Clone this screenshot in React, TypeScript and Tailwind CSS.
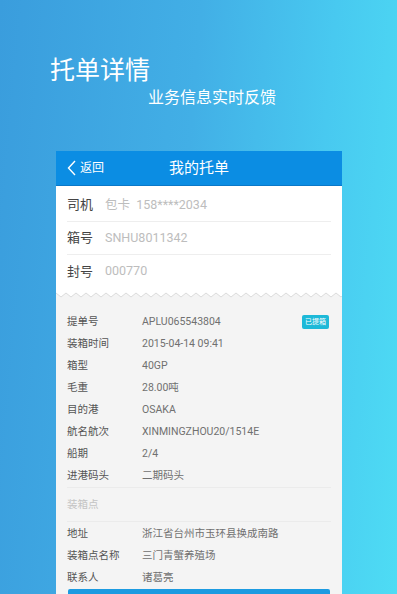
const topRows = [
  { label: "司机", value: "包卡  158****2034" },
  { label: "箱号", value: "SNHU8011342" },
  { label: "封号", value: "000770" },
];

const detailRows = [
  { label: "提单号", value: "APLU065543804", badge: "已提箱" },
  { label: "装箱时间", value: "2015-04-14 09:41" },
  { label: "箱型", value: "40GP" },
  { label: "毛重", value: "28.00吨" },
  { label: "目的港", value: "OSAKA" },
  { label: "航名航次", value: "XINMINGZHOU20/1514E" },
  { label: "船期", value: "2/4" },
  { label: "进港码头", value: "二期码头" },
];

const pointRows = [
  { label: "地址", value: "浙江省台州市玉环县换成南路" },
  { label: "装箱点名称", value: "三门青蟹养殖场" },
  { label: "联系人", value: "诸葛亮" },
];

const font = "font-['Roboto','Noto_Sans_CJK_SC',sans-serif]";

// zigzag edge between the white part and the grey part
const Zigzag = () => {
  const pts: string[] = [];
  for (let x = 0, i = 0; x <= 290; x += 5, i++) pts.push(`${x},${i % 2 ? 9 : 5}`);
  return (
    <svg width="286" height="12" viewBox="0 0 286 12" className="block">
      <rect width="286" height="12" fill="#f4f4f4" />
      <polygon points={`0,0 ${pts.join(" ")} 290,0`} fill="#ffffff" />
      <polyline points={pts.join(" ")} fill="none" stroke="#dcdcdc" strokeWidth="1" />
    </svg>
  );
};

const DetailRow = ({ label, value, badge }: { label: string; value: string; badge?: string }) => (
  <div className="flex h-[22px] items-center">
    <span className="w-[75px] text-[10.5px] text-[#555]">{label}</span>
    <span className="flex-1 text-[10.5px] text-[#707070]">{value}</span>
    {badge ? (
      <span className="mr-[2px] flex h-[14px] items-center rounded-[2px] bg-[#1db9d8] px-[3px] text-[7px] leading-none text-white">
        {badge}
      </span>
    ) : null}
  </div>
);

export default function App() {
  return (
    <div
      className={`h-[594px] w-[397px] overflow-hidden bg-[linear-gradient(95deg,#3a9ddd_0%,#42afe6_45%,#48c9f0_75%,#4edcf4_100%)] ${font}`}
    >
      <div className="pl-[50px] pt-[55px] text-[25px] leading-[32px] text-white">托单详情</div>
      <div className="mt-[1px] pl-[148px] text-[16px] leading-[20px] text-white">业务信息实时反馈</div>

      <div className="ml-[56px] mt-[43px] w-[286px]">
        <div className="relative flex h-[35px] items-center justify-center border-b border-[#0a78c8] bg-[#0b8de3]">
          <div className="absolute left-[11px] flex items-center gap-[4px] text-[12px] text-white">
            <svg width="9" height="16" viewBox="0 0 9 16">
              <polyline points="8,1 1.5,8 8,15" fill="none" stroke="white" strokeWidth="1.4" />
            </svg>
            <span>返回</span>
          </div>
          <span className="text-[15px] text-white">我的托单</span>
        </div>

        <div className="bg-white pt-[3px]">
          {topRows.map((r, i) => (
            <div
              key={r.label}
              className={`mx-[11px] flex h-[33px] items-center ${i < topRows.length - 1 ? "border-b border-[#eeeeee]" : ""}`}
            >
              <span className="w-[38px] text-[13px] text-[#444]">{r.label}</span>
              <span className="whitespace-pre text-[12.5px] text-[#bdbdbd]">{r.value}</span>
            </div>
          ))}
        </div>

        <Zigzag />

        <div className="bg-[#f4f4f4] px-[11px] pt-[11px]">
          {detailRows.map((r) => (
            <DetailRow key={r.label} {...r} />
          ))}
          <div className="flex h-[35px] items-center border-y border-[#ebebeb] text-[10.5px] text-[#c4c4c4]">
            装箱点
          </div>
          <div className="pt-[1px]">
            {pointRows.map((r) => (
              <DetailRow key={r.label} {...r} />
            ))}
          </div>
          <div className="mx-[1px] h-[10px] rounded-t-[2px] bg-[#1c9be1]" />
        </div>
      </div>
    </div>
  );
}
